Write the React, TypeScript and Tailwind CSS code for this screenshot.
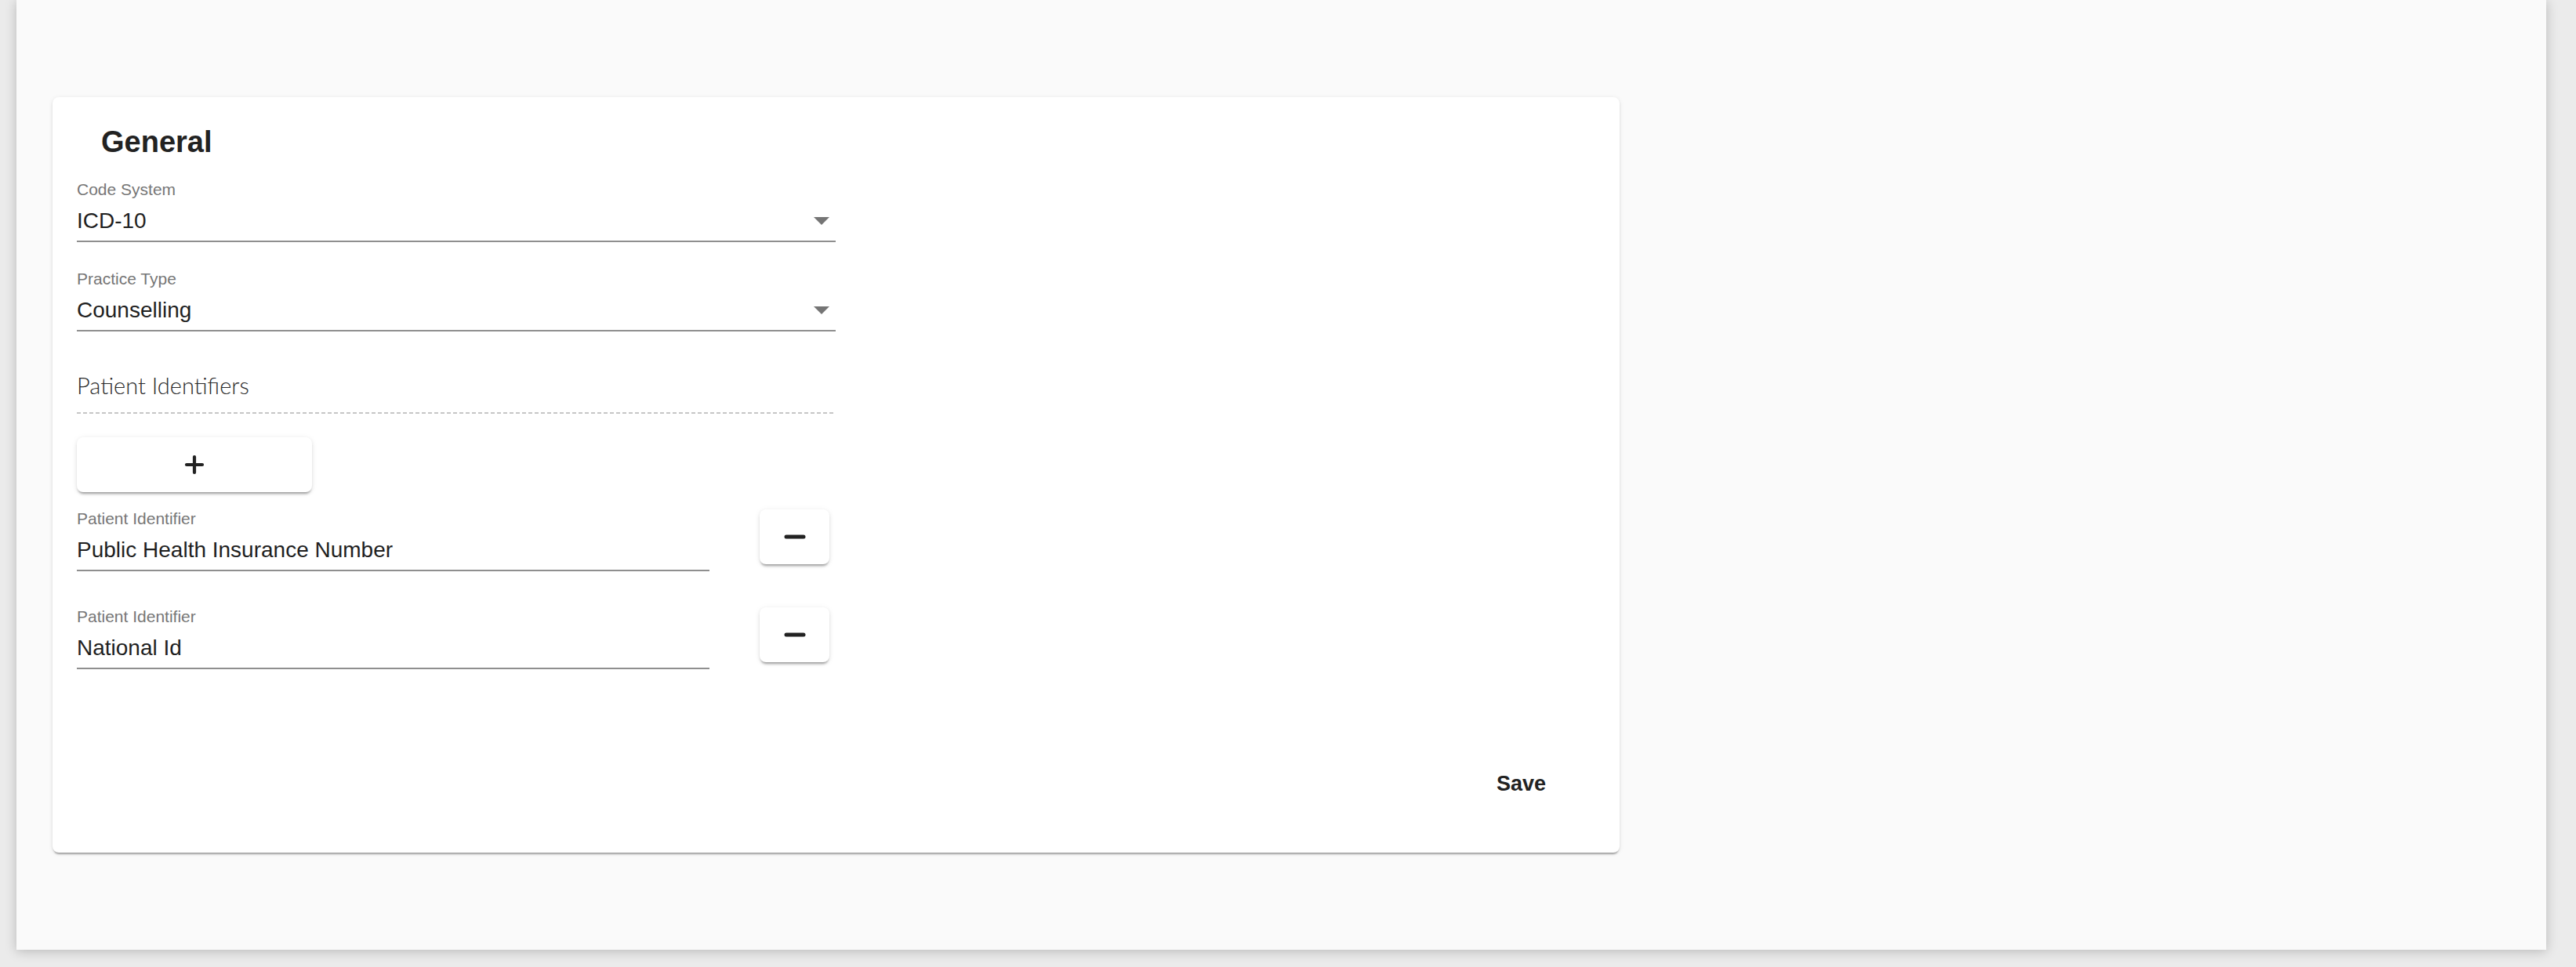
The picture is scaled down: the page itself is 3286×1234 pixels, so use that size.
const cardShadow =
  'shadow-[0_4px_2px_-2px_rgba(0,0,0,0.25),0_2px_3px_0_rgba(0,0,0,0.10),0_1px_6px_0_rgba(0,0,0,0.08)]';

const btnShadow =
  'shadow-[0_4px_3px_-2px_rgba(0,0,0,0.3),0_2px_4px_0_rgba(0,0,0,0.1),0_1px_8px_0_rgba(0,0,0,0.06)]';

const ArrowDrop = () => (
  <svg width="20" height="10" viewBox="7 10 10 5" className="shrink-0">
    <path d="M7 10l5 5 5-5z" fill="#757575" />
  </svg>
);

const PlusIcon = () => (
  <svg width="26" height="26" viewBox="0 0 26 26">
    <path d="M13 3v20M3 13h20" stroke="#222" strokeWidth="4.2" strokeLinecap="round" fill="none" />
  </svg>
);

const MinusIcon = () => (
  <svg width="28" height="8" viewBox="0 0 28 8">
    <path d="M3 4h22" stroke="#222" strokeWidth="5" strokeLinecap="round" fill="none" />
  </svg>
);

type FieldProps = {
  label: string;
  value: string;
  select?: boolean;
  className?: string;
};

const Field = ({ label, value, select, className = '' }: FieldProps) => (
  <div className={`flex flex-col ${className}`}>
    <label className="text-[21px] leading-[24px] text-[#767676]">{label}</label>
    <div className="mt-[12px] flex items-center justify-between border-b-2 border-[#8f8f8f] pb-[9px] pr-[8px]">
      <span className="text-[28px] leading-[32px] text-[#1f1f1f]">{value}</span>
      {select && <ArrowDrop />}
    </div>
  </div>
);

const IdentifierRow = ({ value, className = '' }: { value: string; className?: string }) => (
  <div className={`flex items-start ${className}`}>
    <Field label="Patient Identifier" value={value} className="w-[807px]" />
    <button
      type="button"
      className={`ml-[64px] flex h-[70px] w-[89px] items-center justify-center rounded-[8px] bg-white ${btnShadow}`}
    >
      <MinusIcon />
    </button>
  </div>
);

export default function App() {
  return (
    <div className="min-h-screen bg-[#ebebeb] pb-[22px] pl-[21px] pr-[38px] font-['Liberation_Sans',Arial,sans-serif]">
      <div className="h-[1212px] bg-[#fafafa] pl-[46px] pt-[124px] shadow-[0_2px_14px_rgba(0,0,0,0.22)]">
        <div className={`flex h-[964px] w-[1999px] flex-col rounded-[8px] bg-white px-[31px] pt-[33px] ${cardShadow}`}>
          <h2 className="ml-[31px] text-[38px] font-bold leading-[48px] text-[#222]">General</h2>

          <div className="mt-[25px] w-[968px]">
            <Field label="Code System" value="ICD-10" select />
            <Field label="Practice Type" value="Counselling" select className="mt-[35px]" />

            <div className="mt-[53px] font-['Lato','Liberation_Sans',sans-serif] text-[29px] font-light leading-[32px] text-[#2a2a2a]">
              Patient Identifiers
            </div>
            <div className="mt-[18px] h-[2px] bg-[repeating-linear-gradient(to_right,#c6c6c6_0,#c6c6c6_5px,transparent_5px,transparent_8px)]" />

            <button
              type="button"
              className={`mt-[30px] flex h-[70px] w-[300px] items-center justify-center rounded-[8px] bg-white ${btnShadow}`}
            >
              <PlusIcon />
            </button>

            <IdentifierRow value="Public Health Insurance Number" className="mt-[22px]" />
            <IdentifierRow value="National Id" className="mt-[46px]" />
          </div>

          <div className="mt-[130px] flex justify-end">
            <button
              type="button"
              className="mr-[47px] px-[16px] text-[27px] font-semibold leading-[32px] text-[#222]"
            >
              Save
            </button>
          </div>
        </div>
      </div>
    </div>
  );
}
